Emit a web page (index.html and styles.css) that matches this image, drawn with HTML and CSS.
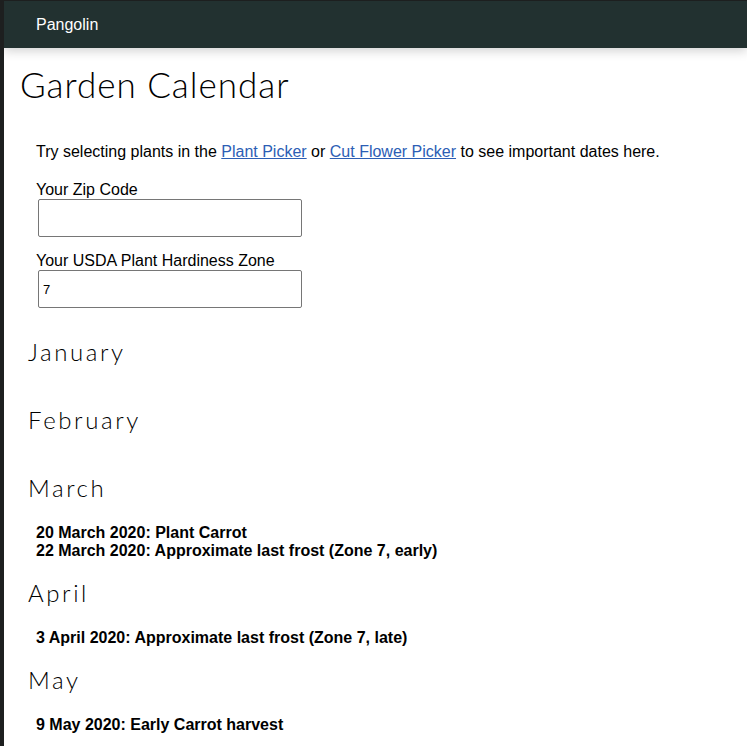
FILE: index.html
```html
<!DOCTYPE html>
<html lang="en">
<head>
    <meta charset="UTF-8">
    <title>Garden Calendar - Pangolin</title>
    <meta name="viewport" content="width=device-width, initial-scale=1.0">
    <link rel="stylesheet" href="styles.css">
</head>
<body>
    <nav class="navbar">
        <span class="brand">Pangolin</span>
    </nav>
    <div class="page">
        <h1 class="page-title">Garden Calendar</h1>
        <div class="intro">
            <p>Try selecting plants in the <a href="#">Plant Picker</a> or <a href="#">Cut Flower Picker</a> to see important dates here.</p>
            <label class="field">
                <span>Your Zip Code</span>
                <input type="text" value="">
            </label>
            <label class="field">
                <span>Your USDA Plant Hardiness Zone</span>
                <input type="text" value="7">
            </label>
        </div>

        <section class="month empty">
            <h2>January</h2>
        </section>
        <section class="month empty">
            <h2>February</h2>
        </section>
        <section class="month">
            <h2>March</h2>
            <ul class="events">
                <li>20 March 2020: Plant Carrot</li>
                <li>22 March 2020: Approximate last frost (Zone 7, early)</li>
            </ul>
        </section>
        <section class="month">
            <h2>April</h2>
            <ul class="events">
                <li>3 April 2020: Approximate last frost (Zone 7, late)</li>
            </ul>
        </section>
        <section class="month">
            <h2>May</h2>
            <ul class="events">
                <li>9 May 2020: Early Carrot harvest</li>
            </ul>
        </section>
    </div>
</body>
</html>
```

FILE: styles.css
```css
body {
    margin: 0;
    border-left: 4px solid #1d1f1f;
    border-top: 1px solid #1d1f1f;
    font-family: "Liberation Sans", Arial, sans-serif;
    font-size: 16px;
    color: #000;
    background: #fff;
    min-height: 100vh;
}
a {
    color: #2c5eb5;
}
.navbar {
    height: 47px;
    background: #223130;
    display: flex;
    align-items: center;
    padding-left: 32px;
    box-shadow: 0 3px 10px rgba(0,0,0,0.18);
    position: relative;
}
.brand {
    color: #fff;
    font-size: 16px;
}
.page {
    padding: 0 16px;
}
.page-title {
    font-family: "Lato", sans-serif;
    font-weight: 300;
    font-size: 35px;
    letter-spacing: 1px;
    margin: 15px 0 38px 0;
    line-height: 1.2;
}
.intro {
    padding: 0 16px;
    margin-bottom: 29px;
}
.intro p {
    margin: 0 0 20px 0;
    line-height: 18px;
}
.field {
    display: flex;
    flex-direction: column;
    align-items: flex-start;
    margin-bottom: 15px;
}
.field span {
    line-height: 18px;
}
.field input {
    margin: 0 0 0 2px;
    width: 264px;
    height: 38px;
    box-sizing: border-box;
    border: 1px solid #767676;
    border-radius: 2px;
    padding: 0 4px;
    font-family: "Liberation Sans", Arial, sans-serif;
    font-size: 13px;
}
.month {
    margin-bottom: 18px;
}
.month.empty {
    margin-bottom: 38px;
}
.month h2 {
    font-family: "Lato", sans-serif;
    font-weight: 300;
    font-size: 24px;
    letter-spacing: 2.6px;
    margin: 0 0 0 8px;
    line-height: 30px;
}
.events {
    list-style: none;
    margin: 21px 0 0 0;
    padding: 0 16px;
    font-weight: bold;
    line-height: 18px;
}
```
